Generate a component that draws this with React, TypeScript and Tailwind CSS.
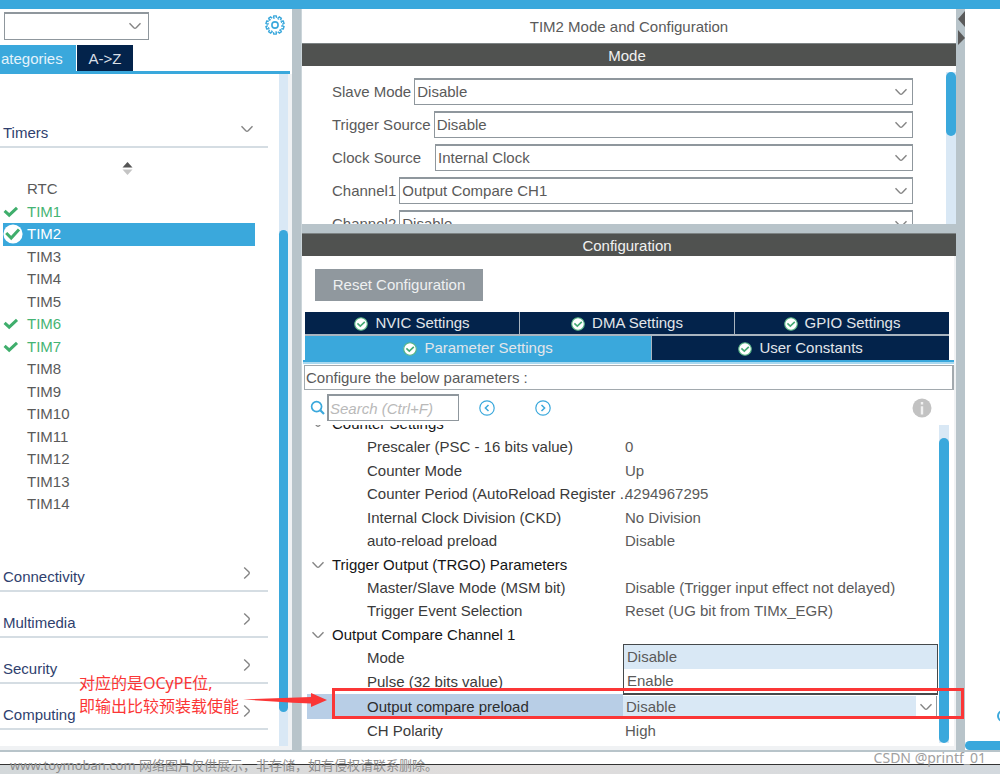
import React from "react";

function Chevron({ className = "" }: { className?: string }) {
  return (
    <svg aria-hidden="true" viewBox="0 0 12 8" className={`h-2 w-3 shrink-0 fill-none stroke-[#858585] ${className}`}>
      <path d="M0.5 1.2 L4.8 5.7 Q6 6.8 7.2 5.7 L11.5 1.2" strokeWidth="1.4" />
    </svg>
  );
}

function Tick() {
  return (
    <svg aria-hidden="true" viewBox="0 0 16 12" className="h-3 w-4 fill-none stroke-[#3fae6c]">
      <path d="M1.6 4.8 L6.2 9.2 L14 1.8" strokeWidth="3" />
    </svg>
  );
}

function TickDisc() {
  return (
    <svg aria-hidden="true" viewBox="0 0 20 20" className="h-5 w-5">
      <circle cx="10" cy="10" r="9.6" fill="#fff" />
      <path d="M3.2 9 L8.2 14 L16 5.6" fill="none" stroke="#3fae6c" strokeWidth="3" />
    </svg>
  );
}

function StatusIcon() {
  return (
    <svg aria-hidden="true" viewBox="0 0 14 14" className="h-3.5 w-3.5 shrink-0">
      <circle cx="7" cy="7" r="6.3" fill="#fff" stroke="#55b483" strokeWidth="1.1" />
      <path d="M3.4 6.4 L6.3 9.2 L10.8 4.9" fill="none" stroke="#45aa74" strokeWidth="1.6" />
    </svg>
  );
}

function Gear() {
  const teeth = Array.from({ length: 10 }, (_, i) => i * 36);
  return (
    <svg aria-hidden="true" viewBox="0 0 20 20" className="h-5 w-5 fill-none stroke-[#3aa8dc]">
      {teeth.map((a) => (
        <path key={a} d="M8.4 2.9 L8.8 0.9 H11.2 L11.6 2.9" strokeWidth="1.4" transform={`rotate(${a} 10 10)`} />
      ))}
      <circle cx="10" cy="10" r="7" strokeWidth="1.1" strokeDasharray="2 2.4" />
      <circle cx="10" cy="10" r="3.1" strokeWidth="1.6" />
    </svg>
  );
}

function RoundArrow({ flip = false }: { flip?: boolean }) {
  return (
    <svg aria-hidden="true" viewBox="0 0 16 16" className="h-4 w-4 fill-none stroke-[#3aa8dc]">
      <circle cx="8" cy="8" r="7.2" strokeWidth="1.2" />
      <path d={flip ? "M6.5 5 L9.6 8 L6.5 11" : "M9.5 5 L6.4 8 L9.5 11"} strokeWidth="1.5" />
    </svg>
  );
}

const timers = ["RTC", "TIM1", "TIM2", "TIM3", "TIM4", "TIM5", "TIM6", "TIM7", "TIM8", "TIM9", "TIM10", "TIM11", "TIM12", "TIM13", "TIM14"];
const enabled = ["TIM1", "TIM6", "TIM7"];

function TimerRow({ name }: { name: string }) {
  const selected = name === "TIM2";
  const color = selected ? "bg-[#3aa8dc] text-white" : enabled.includes(name) ? "text-[#45b474]" : "text-[#5a5a5a]";
  return (
    <li className="flex flex-1">
      <button type="button" className={`ml-[3px] flex w-[252px] items-center text-left ${color}`}>
        <span className="flex w-6 shrink-0 items-center">
          {selected && <TickDisc />}
          {enabled.includes(name) && <Tick />}
        </span>
        {name}
      </button>
    </li>
  );
}

function Category({ name, open = false }: { name: string; open?: boolean }) {
  return (
    <button type="button" className="flex h-[46px] w-[268px] items-end justify-between border-b-2 border-[#d5dde3] pb-[3px] pl-[3px] text-left text-[#2f3f6e]">
      <span className="leading-5">{name}</span>
      <span className={`mb-2.5 mr-[15px] flex w-3 justify-center ${open ? "" : "-rotate-90"}`}>
        <Chevron />
      </span>
    </button>
  );
}

function Sidebar() {
  return (
    <aside className="flex w-[292px] shrink-0 flex-col">
      <div className="flex h-9 items-start justify-between pt-[3px]">
        <div className="relative ml-1">
          <select aria-label="Search peripherals" className="h-[28px] w-[145px] appearance-none border border-t-2 border-[#8f979d] bg-white" />
          <Chevron className="pointer-events-none absolute right-2 top-2.5" />
        </div>
        <button type="button" aria-label="Settings" className="mr-[7px] mt-[3px]">
          <Gear />
        </button>
      </div>
      <div className="flex h-[26px] gap-px pt-px">
        <button type="button" className="-mt-px flex w-[76px] items-center bg-[#3aa8dc] pl-px pt-0.5 text-[#e4f3fb]">
          ategories
        </button>
        <button type="button" className="-mt-px w-14 bg-[#03234b] pt-0.5 text-[#d9dfe6]">
          A-&gt;Z
        </button>
      </div>
      <div className="mr-0.5 h-[3px] bg-[#3aa8dc]" />
      <div className="flex flex-1 border-b-4 border-r-4 border-[#f0f2f4]">
        <div className="flex-1 pt-7">
          <Category name="Timers" open />
          <div className="flex h-[30px] items-center pl-[122px] pt-2.5">
            <svg aria-hidden="true" viewBox="0 0 11 13" className="h-[13px] w-[11px]">
              <path d="M5.5 0 L10.5 5.5 H0.5 Z" fill="#555" />
              <path d="M5.5 13 L10.5 7.5 H0.5 Z" fill="#c4c4c4" />
            </svg>
          </div>
          <ul className="flex h-[338px] flex-col">
            {timers.map((t) => (
              <TimerRow key={t} name={t} />
            ))}
          </ul>
          <div className="pt-[30px]">
            <Category name="Connectivity" />
            <Category name="Multimedia" />
            <Category name="Security" />
            <Category name="Computing" />
          </div>
        </div>
        <div className="flex w-[9px] flex-col bg-[#d9e8f5] pb-[34px] pt-[156px]">
          <div className="flex-1 rounded-full bg-[#3aa8dc]" />
        </div>
      </div>
    </aside>
  );
}

function ModeField({ id, label, value, labelWidth = "" }: { id: string; label: string; value: string; labelWidth?: string }) {
  return (
    <div className="flex items-center">
      <label htmlFor={id} className={`shrink-0 whitespace-nowrap pr-[3px] pt-0.5 ${labelWidth}`}>
        {label}
      </label>
      <div className="relative flex-1">
        <select id={id} className="block h-[27px] w-full appearance-none border border-t-2 border-[#8f979d] bg-white pl-0.5">
          <option>{value}</option>
        </select>
        <Chevron className="pointer-events-none absolute right-1.5 top-2.5" />
      </div>
    </div>
  );
}

function TabButton({ label, className }: { label: string; className: string }) {
  return (
    <button type="button" className={`flex items-center justify-center gap-[7px] pt-px ${className}`}>
      <StatusIcon />
      {label}
    </button>
  );
}

type Row = { name: string; value?: string; group?: boolean };
const rows: Row[] = [
  { name: "Counter Settings", group: true },
  { name: "Prescaler (PSC - 16 bits value)", value: "0" },
  { name: "Counter Mode", value: "Up" },
  { name: "Counter Period (AutoReload Register ..", value: "4294967295" },
  { name: "Internal Clock Division (CKD)", value: "No Division" },
  { name: "auto-reload preload", value: "Disable" },
  { name: "Trigger Output (TRGO) Parameters", group: true },
  { name: "Master/Slave Mode (MSM bit)", value: "Disable (Trigger input effect not delayed)" },
  { name: "Trigger Event Selection", value: "Reset (UG bit from TIMx_EGR)" },
  { name: "Output Compare Channel 1", group: true },
  { name: "Mode", value: "" },
  { name: "Pulse (32 bits value)", value: "" },
  { name: "Output compare preload", value: "Disable" },
  { name: "CH Polarity", value: "High" },
];

function ParameterRow({ row }: { row: Row }) {
  if (row.group) {
    return (
      <tr>
        <th colSpan={2} scope="rowgroup" className="p-0 text-left font-normal text-[#151515]">
          <span className="flex items-center gap-2 pl-[5px]">
            <Chevron />
            {row.name}
          </span>
        </th>
      </tr>
    );
  }
  if (row.name === "Output compare preload") {
    return (
      <tr>
        <td className="bg-[#b8cee6] p-0 pl-[60px] text-[#2d2d2d]">
          <label htmlFor="preload">{row.name}</label>
        </td>
        <td className="p-0">
          <div className="relative">
            <select id="preload" className="block h-[22px] w-full appearance-none border-r border-[#8f979d] bg-[#d9e8f5] pl-[3px] text-[#5a5a5a]">
              <option>Disable</option>
              <option>Enable</option>
            </select>
            <span className="pointer-events-none absolute inset-y-0 right-px flex w-5 items-center justify-center bg-white">
              <Chevron />
            </span>
          </div>
        </td>
      </tr>
    );
  }
  return (
    <tr>
      <td className="p-0 pl-[60px] text-[#3a3a3a]">{row.name}</td>
      <td className="p-0 pl-0.5">{row.value}</td>
    </tr>
  );
}

function ParameterTree() {
  return (
    <div className="flex flex-1 overflow-hidden">
      <div className="relative flex-1">
        <table className="-mt-[13px] ml-[5px] h-[331px] w-[calc(100%-7px)] table-fixed border-collapse whitespace-nowrap leading-5">
          <colgroup>
            <col className="w-[316px]" />
            <col />
          </colgroup>
          <tbody>
            {rows.map((r) => (
              <ParameterRow key={r.name} row={r} />
            ))}
          </tbody>
        </table>
        <ul className="absolute bottom-[51px] left-[321px] right-px border border-b-2 border-[#45494b] bg-white leading-6">
          <li className="bg-[#d9e8f5] pl-[3px]">Disable</li>
          <li className="pl-[3px]">Enable</li>
        </ul>
      </div>
      <div className="mb-[3px] mr-[5px] flex w-[10px] flex-col bg-[#d9e8f5] pt-[13px]">
        <div className="flex-1 rounded-full bg-[#3aa8dc]" />
      </div>
    </div>
  );
}

function Configuration() {
  return (
    <section className="flex flex-1 flex-col border-b-4 border-r-2 border-[#f0f2f4]">
      <div className="px-[13px] pb-[11px] pt-[13px]">
        <button type="button" className="h-8 w-[168px] bg-[#90989e] pt-px text-[#eef0f1]">
          Reset Configuration
        </button>
      </div>
      <div className="ml-[3px] mr-[5px] flex flex-col gap-0.5 bg-[#a9b4bf] text-[#e2e6ea]">
        <div className="flex h-[22px] gap-px">
          <TabButton label="NVIC Settings" className="flex-1 bg-[#03234b] pt-0.5" />
          <TabButton label="DMA Settings" className="flex-1 bg-[#03234b] pt-0.5" />
          <TabButton label="GPIO Settings" className="flex-1 bg-[#03234b] pt-0.5" />
        </div>
        <div className="flex h-6 gap-px">
          <TabButton label="Parameter Settings" className="grow-[7] basis-0 bg-[#3aa8dc]" />
          <TabButton label="User Constants" className="grow-[6] basis-0 bg-[#03234b]" />
        </div>
      </div>
      <div className="ml-px h-1 border-y-2 border-b-[#a9d9f0] border-t-[#3aa8dc]" />
      <div className="ml-0.5 mt-px h-[25px] border border-r-2 border-[#a2a9ae] pl-px leading-6">Configure the below parameters :</div>
      <div className="flex h-[35px] items-center pl-2 pr-[22px]">
        <label htmlFor="find" className="mr-0.5">
          <svg aria-label="Search" viewBox="0 0 15 15" className="h-[15px] w-[15px] fill-none stroke-[#3aa8dc]">
            <circle cx="6.6" cy="6.6" r="5" strokeWidth="1.7" />
            <path d="M10.3 10.3 L14 14" strokeWidth="2.2" />
          </svg>
        </label>
        <input
          id="find"
          placeholder="Search (Ctrl+F)"
          className="h-[27px] w-[132px] border-2 border-b border-r border-[#8f979d] pl-px italic placeholder:text-[#b9b9b9]"
        />
        <button type="button" aria-label="Previous match" className="ml-5">
          <RoundArrow />
        </button>
        <button type="button" aria-label="Next match" className="ml-10">
          <RoundArrow flip />
        </button>
        <button type="button" aria-label="Information" className="ml-auto">
          <svg aria-hidden="true" viewBox="0 0 20 20" className="h-5 w-5">
            <circle cx="10" cy="10" r="9.5" fill="#c2c2c2" />
            <path d="M10 8.3 V16.5 M10 4 V6.6" fill="none" stroke="#f1f1f1" strokeWidth="2.4" />
          </svg>
        </button>
      </div>
      <ParameterTree />
    </section>
  );
}

function Bar({ title }: { title: string }) {
  return <h2 className="h-[23px] shrink-0 border-t border-[#7d8384] bg-[#505250] pr-1 text-center leading-6 text-[#f1f1f1]">{title}</h2>;
}

function Center() {
  return (
    <main className="flex min-w-0 flex-1 flex-col">
      <h1 className="h-[34px] text-center leading-9">TIM2 Mode and Configuration</h1>
      <Bar title="Mode" />
      <section className="flex h-[158px] shrink-0 overflow-hidden">
        <div className="flex flex-1 flex-col gap-1.5 pl-[30px] pr-[33px] pt-3">
          <ModeField id="slave" label="Slave Mode" value="Disable" />
          <ModeField id="trigger" label="Trigger Source" value="Disable" />
          <ModeField id="clock" label="Clock Source" value="Internal Clock" labelWidth="w-[103px]" />
          <ModeField id="ch1" label="Channel1" value="Output Compare CH1" />
          <ModeField id="ch2" label="Channel2" value="Disable" />
        </div>
        <div className="mt-1.5 w-[10px] bg-[#d9e8f5]">
          <div className="h-16 rounded-full bg-[#3aa8dc]" />
        </div>
      </section>
      <div className="h-[9px] shrink-0 bg-[#b8c4ca]" />
      <Bar title="Configuration" />
      <Configuration />
    </main>
  );
}

function Annotation() {
  return (
    <div className="pointer-events-none">
      <p className="absolute bottom-[56px] left-[79px] whitespace-nowrap font-['Noto_Sans','Noto_Sans_CJK_SC',sans-serif] text-base leading-[23px] text-[#fb3636]">
        对应的是OCyPE位,
        <br />
        即输出比较预装载使能
      </p>
      <svg aria-hidden="true" viewBox="0 0 84 16" className="absolute bottom-[66px] left-[243px] h-4 w-[84px] fill-[#fb3636]">
        <path d="M0 7.4 L68 5 V1 L84 8 L68 15 V11.5 L50 10.8 Z" />
      </svg>
      <div className="absolute bottom-[55px] left-[332px] right-[36px] h-[31px] border-[3px] border-[#fb3636]" />
    </div>
  );
}

export default function App() {
  return (
    <div className="relative flex min-h-screen flex-col overflow-hidden bg-white font-['Liberation_Sans',Arial,sans-serif] text-[15px] text-[#5a5a5a]">
      <div className="h-[9px] bg-[#3aa8dc]" />
      <div className="flex flex-1 border-b-2 border-[#b8c4ca]">
        <Sidebar />
        <div className="w-[10px] shrink-0 border-r border-[#cbd5da] bg-[#b8c4ca]" />
        <Center />
        <div className="w-[9px] shrink-0 bg-[#b8c4ca] pt-0.5">
          <svg aria-hidden="true" viewBox="0 0 9 36" className="h-9 w-[9px] fill-[#5a5a5a]">
            <path d="M9 0 V16 L2 8 Z" />
            <path d="M2 19 V34 L9 27 Z" />
          </svg>
        </div>
        <aside className="flex w-[35px] shrink-0 flex-col justify-end overflow-hidden">
          <svg aria-hidden="true" viewBox="0 0 12 12" className="mb-[19px] ml-8 h-3 w-3 fill-none stroke-[#3aa8dc]">
            <circle cx="6" cy="6" r="5" strokeWidth="2" />
          </svg>
          <div className="h-[9px] rounded-l-full bg-[#3aa8dc]" />
        </aside>
      </div>
      <footer className="relative flex h-[22px] shrink-0 flex-col">
        <div className="h-3" />
        <div className="h-[10px] border-t border-[#333] bg-linear-to-r from-[#d3d8da] via-[#e0dddc] to-[#d3d9de]" />
        <p className="absolute left-2.5 top-[3px] whitespace-nowrap font-['Noto_Sans','Noto_Sans_CJK_SC',sans-serif] text-[13px] leading-5 text-[#8d8d8d]">
          www.toymoban.com 网络图片仅供展示，非存储，如有侵权请联系删除。
        </p>
        <p className="absolute -top-1 right-3.5 whitespace-nowrap font-['Noto_Sans',sans-serif] text-sm leading-5 text-[#a0a0a0]">CSDN @printf_01</p>
      </footer>
      <Annotation />
    </div>
  );
}
